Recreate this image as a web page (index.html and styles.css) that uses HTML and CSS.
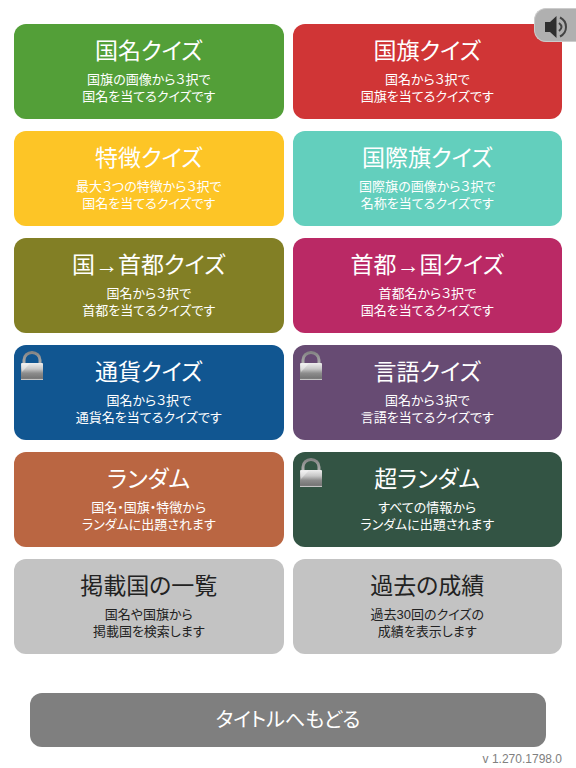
FILE: index.html
```html
<!DOCTYPE html>
<html lang="ja">
    <head>
        <meta charset="utf-8">
        <meta name="viewport" content="width=device-width, initial-scale=1">
        <title>国旗クイズ</title>
        <link rel="stylesheet" href="styles.css">
    </head>
    <body>
        <!-- shared lock gradients and shape -->
        <svg class="defs" width="0" height="0" aria-hidden="true">
            <defs>
                <linearGradient id="lockBody" x1="0" y1="0" x2="0" y2="1">
                    <stop offset="0" stop-color="#eee"/>
                    <stop offset="0.35" stop-color="#c6c6c6"/>
                    <stop offset="0.6" stop-color="#8c8c8c"/>
                    <stop offset="0.9" stop-color="#757575"/>
                    <stop offset="1" stop-color="#aaa"/>
                </linearGradient>
                <linearGradient id="lockBar" x1="0" y1="0" x2="0" y2="1">
                    <stop offset="0" stop-color="#858585"/>
                    <stop offset="1" stop-color="#b4b4b4"/>
                </linearGradient>
                <symbol id="lock" viewBox="0 0 24 30">
                    <path d="M4 14V9a8 7.500 0 0 1 16 0V14" fill="none" stroke="url(#lockBar)" stroke-width="3"/>
                    <rect x="1" y="12" width="22" height="17" rx="1" fill="url(#lockBody)"/>
                    <path d="M2 12.500L10 12.500L2 21z" fill="#fff" opacity="0.4"/>
                    <path d="M1 28.500h22" stroke="#c4c4c4"/>
                </symbol>
            </defs>
        </svg>

        <button class="sound" aria-label="サウンド">
            <svg width="24" height="24" viewBox="0 0 24 24">
                <path d="M1 7h5L12.500 1v22L6 17H1z" fill="#2f2f2f"/>
                <path d="M15 8q5 4 0 8" fill="none" stroke="#444" stroke-width="2"/>
                <path d="M16 2.500c8 4 8 15 0 19" fill="none" stroke="#444" stroke-width="2"/>
            </svg>
        </button>

        <div class="menu">
            <button class="card green">
                <span class="name">国名クイズ</span>
                <span class="desc">国旗の画像から３択で<br>国名を当てるクイズです</span>
            </button>
            <button class="card red">
                <span class="name">国旗クイズ</span>
                <span class="desc">国名から３択で<br>国旗を当てるクイズです</span>
            </button>
            <button class="card yellow">
                <span class="name">特徴クイズ</span>
                <span class="desc">最大３つの特徴から３択で<br>国名を当てるクイズです</span>
            </button>
            <button class="card mint">
                <span class="name">国際旗クイズ</span>
                <span class="desc">国際旗の画像から３択で<br>名称を当てるクイズです</span>
            </button>
            <button class="card olive">
                <span class="name">国→首都クイズ</span>
                <span class="desc">国名から３択で<br>首都を当てるクイズです</span>
            </button>
            <button class="card pink">
                <span class="name">首都→国クイズ</span>
                <span class="desc">首都名から３択で<br>国名を当てるクイズです</span>
            </button>
            <button class="card blue">
                <svg class="lock"><use href="#lock"/></svg>
                <span class="name">通貨クイズ</span>
                <span class="desc">国名から３択で<br>通貨名を当てるクイズです</span>
            </button>
            <button class="card purple">
                <svg class="lock"><use href="#lock"/></svg>
                <span class="name">言語クイズ</span>
                <span class="desc">国名から３択で<br>言語を当てるクイズです</span>
            </button>
            <button class="card brown">
                <span class="name">ランダム</span>
                <span class="desc">国名・国旗・特徴から<br>ランダムに出題されます</span>
            </button>
            <button class="card forest">
                <svg class="lock"><use href="#lock"/></svg>
                <span class="name">超ランダム</span>
                <span class="desc">すべての情報から<br>ランダムに出題されます</span>
            </button>
            <button class="card gray">
                <span class="name">掲載国の一覧</span>
                <span class="desc">国名や国旗から<br>掲載国を検索します</span>
            </button>
            <button class="card gray">
                <span class="name">過去の成績</span>
                <span class="desc">過去30回のクイズの<br>成績を表示します</span>
            </button>
        </div>

        <div class="footer">
            <button class="back">タイトルへもどる</button>
            <div class="version">v 1.270.1798.0</div>
        </div>
    </body>
</html>
```
FILE: styles.css
```css
body {
    margin: 0;
    padding: 24px 14px 0;
    background: #fff;
    font-family: "Liberation Sans", "Noto Sans CJK JP", sans-serif;
    font-feature-settings: "palt";
}
button {
    border: none;
    font: inherit;
    font-feature-settings: inherit;
    cursor: pointer;
}
.defs {
    position: absolute;
}
.menu {
    display: grid;
    grid-template-columns: 1fr 1fr;
    gap: 12px 9px;
}
.card {
    position: relative;
    display: flex;
    flex-direction: column;
    align-items: center;
    min-height: 95px;
    padding: 11px 8px 13px;
    border-radius: 12px;
    color: #fff;
    text-align: center;
}
.name {
    font-size: 23px;
    line-height: 32px;
    margin-bottom: 4px;
}
.desc {
    font-size: 13px;
    line-height: 17px;
}
.lock {
    position: absolute;
    left: 6px;
    top: 6px;
    width: 24px;
    height: 30px;
}
.green {
    background: #539f38;
}
.red {
    background: #d03536;
}
.yellow {
    background: #fdc526;
}
.mint {
    background: #63cfbd;
}
.olive {
    background: #827f25;
}
.pink {
    background: #ba2965;
}
.blue {
    background: #115691;
}
.purple {
    background: #674b73;
}
.brown {
    background: #ba6642;
}
.forest {
    background: #335444;
}
.gray {
    background: #c3c3c3;
    color: #222;
}
/* tab stuck to the right edge, over the cards */
.sound {
    position: absolute;
    top: 8px;
    right: 0;
    z-index: 1;
    width: 42px;
    height: 34px;
    padding: 3px 0 0 9px;
    border: 1px solid #ccc;
    border-right: none;
    border-radius: 12px 0 0 12px;
    background: #b0b0b0;
    text-align: left;
    line-height: 0;
}
.footer {
    margin-top: 39px;
}
.back {
    display: block;
    width: calc(100% - 32px);
    height: 54px;
    margin: 0 16px;
    padding: 0 0 4px;
    border-radius: 12px;
    background: #7f7f7f;
    color: #fff;
    font-size: 20px;
}
.version {
    margin-top: 4px;
    color: #808080;
    font-size: 12px;
    line-height: 16px;
    text-align: right;
}
```
